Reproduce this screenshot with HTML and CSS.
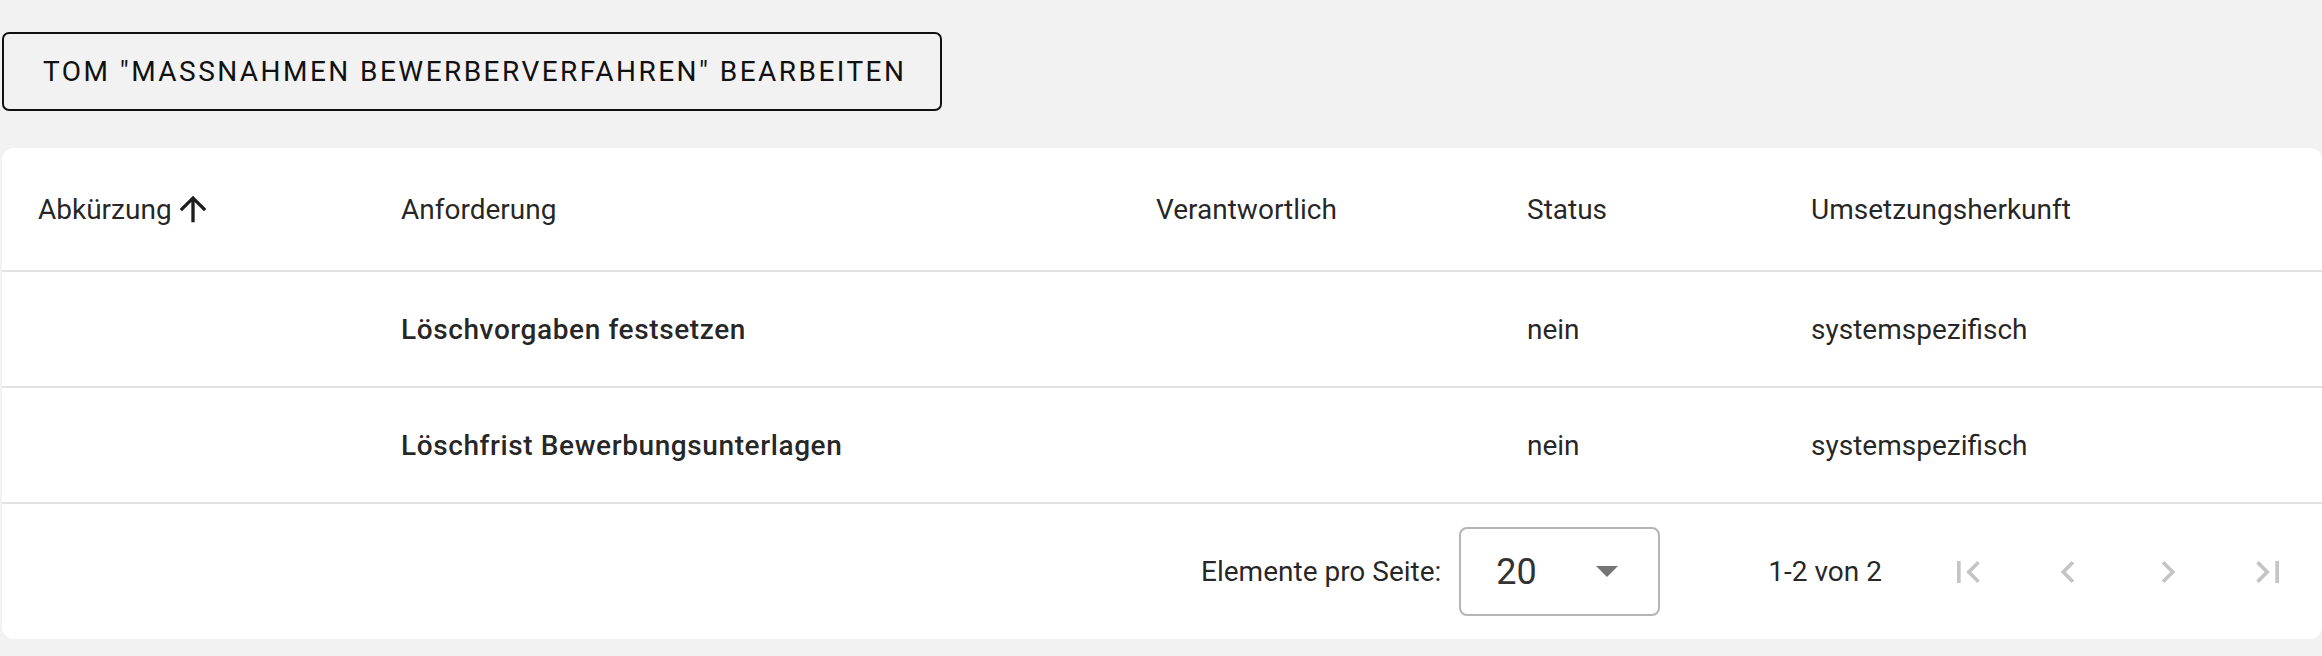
FILE: index.html
```html
<!DOCTYPE html>
<html lang="de">
<head>
<meta charset="utf-8">
<title>TOM bearbeiten</title>
<link rel="stylesheet" href="styles.css">
</head>
<body>
<div class="page">
  <div class="actions">
    <button class="btn-edit">TOM "MASSNAHMEN BEWERBERVERFAHREN" BEARBEITEN</button>
  </div>
  <div class="card">
    <div class="row header">
      <div class="cell first sort">Abkürzung<svg class="sort-icon" viewBox="0 0 24 24"><path d="M4 12l1.41 1.41L11 7.83V20h2V7.83l5.58 5.59L20 12l-8-8-8 8z"/></svg></div>
      <div class="cell">Anforderung</div>
      <div class="cell">Verantwortlich</div>
      <div class="cell">Status</div>
      <div class="cell">Umsetzungsherkunft</div>
    </div>
    <div class="row body">
      <div class="cell first"></div>
      <div class="cell strong">Löschvorgaben festsetzen</div>
      <div class="cell"></div>
      <div class="cell">nein</div>
      <div class="cell">systemspezifisch</div>
    </div>
    <div class="row body">
      <div class="cell first"></div>
      <div class="cell strong">Löschfrist Bewerbungsunterlagen</div>
      <div class="cell"></div>
      <div class="cell">nein</div>
      <div class="cell">systemspezifisch</div>
    </div>
    <div class="paginator">
      <span class="page-size-label">Elemente pro Seite:</span>
      <div class="select">
        <span class="select-value">20</span>
        <span class="select-arrow"></span>
      </div>
      <span class="range">1-2 von 2</span>
      <div class="nav">
        <button class="nav-btn"><svg viewBox="0 0 24 24"><path d="M18.41 16.59L13.82 12l4.59-4.59L17 6l-6 6 6 6zM6 6h2v12H6z"/></svg></button>
        <button class="nav-btn"><svg viewBox="0 0 24 24"><path d="M15.41 7.41L14 6l-6 6 6 6 1.41-1.41L10.83 12z"/></svg></button>
        <button class="nav-btn"><svg viewBox="0 0 24 24"><path d="M10 6L8.59 7.41 13.17 12l-4.58 4.59L10 18l6-6z"/></svg></button>
        <button class="nav-btn"><svg viewBox="0 0 24 24"><path d="M5.59 7.41L10.18 12l-4.59 4.59L7 18l6-6-6-6zM16 6h2v12h-2z"/></svg></button>
      </div>
    </div>
  </div>
</div>
</body>
</html>
```

FILE: styles.css
```css
html, body {
  margin: 0;
  padding: 0;
  background: #f2f2f2;
  font-family: Roboto, "Noto Sans", "Liberation Sans", sans-serif;
  color: rgba(0, 0, 0, 0.87);
}

.page {
  padding: 32px 0 0 2px;
  width: 2320px;
}

.actions {
  display: flex;
}

.btn-edit {
  height: 79px;
  padding: 0 34px 0 39px;
  background: #f2f2f2;
  border: 2px solid #111;
  border-radius: 7px;
  font-family: Roboto, "Noto Sans", sans-serif;
  font-size: 28px;
  font-weight: 400;
  letter-spacing: 2.45px;
  color: #111;
  display: flex;
  align-items: center;
}

.card {
  margin-top: 37px;
  background: #fff;
  border-radius: 12px;
  overflow: hidden;
}

.row {
  display: grid;
  grid-template-columns: 399px 755px 371px 284px 1fr;
  align-items: center;
  border-bottom: 2px solid #e2e2e2;
  font-size: 28px;
}

.row.header {
  height: 122px;
}

.row.body {
  height: 114px;
}

.row.body:last-of-type {
  border-bottom-color: #efefef;
}

.cell {
  white-space: nowrap;
}

.cell.first {
  padding-left: 36px;
}

.cell.strong {
  font-weight: 500;
  letter-spacing: 0.6px;
}

.sort {
  display: flex;
  align-items: center;
}

.sort-icon {
  width: 40px;
  height: 40px;
  margin-left: 1px;
  fill: #1e1e1e;
}

.paginator {
  height: 135px;
  display: flex;
  align-items: center;
  justify-content: flex-end;
  padding-right: 4px;
  font-size: 28px;
}

.page-size-label {
  margin-right: 18px;
}

.select {
  width: 201px;
  height: 89px;
  box-sizing: border-box;
  border: 2px solid #b5b5b5;
  border-radius: 8px;
  display: flex;
  align-items: center;
  padding-left: 35px;
}

.select-value {
  font-size: 36px;
  color: #333;
  flex: 1;
}

.select-arrow {
  width: 0;
  height: 0;
  border-left: 11px solid transparent;
  border-right: 11px solid transparent;
  border-top: 11px solid #767676;
  margin-right: 40px;
}

.range {
  margin-left: 108px;
  margin-right: 36px;
}

.nav {
  display: flex;
}

.nav-btn {
  width: 100px;
  height: 60px;
  padding: 0;
  border: 0;
  background: transparent;
  display: flex;
  align-items: center;
  justify-content: center;
}

.nav-btn svg {
  width: 44px;
  height: 44px;
  fill: #c4c4c4;
}
```
